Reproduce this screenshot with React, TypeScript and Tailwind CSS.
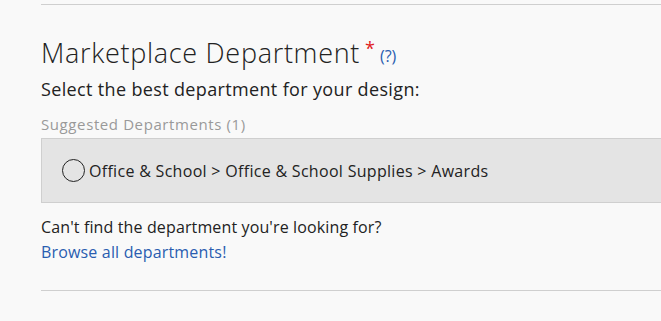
export default function App() {
  return (
    <div className="w-[661px] h-[321px] overflow-hidden bg-[#f9f9f9] pl-[41px] pt-1 text-[#222] font-['Open_Sans',sans-serif]">
      <div className="border-t border-[#cfcfcf]" />
      <div className="pt-[31px] flex items-start">
        <h2 className="text-[27px] leading-[34px] font-light tracking-[0.7px] text-[#222]">Marketplace Department</h2>
        <span className="ml-[5px] mt-[-1px] text-[18px] text-[#e02020]">*</span>
        <a className="ml-[5px] mt-[8px] text-[16px] text-[#2a5db0]">(?)</a>
      </div>
      <p className="mt-[7px] text-[18px] leading-[24px] tracking-[0.35px]">Select the best department for your design:</p>
      <p className="mt-[13px] text-[15px] leading-[20px] tracking-[0.6px] text-[#999]">Suggested Departments (1)</p>
      <div className="mt-[4px] h-[65px] border border-r-0 border-[#cfcfcf] bg-[#e4e4e4] flex items-center pl-[20px]">
        <span className="w-[23px] h-[23px] rounded-full border border-[#222] bg-[#e4e4e4]" />
        <span className="ml-[4px] text-[16px] tracking-[0.3px]">Office &amp; School &gt; Office &amp; School Supplies &gt; Awards</span>
      </div>
      <p className="mt-[13px] text-[16px] leading-[22px] tracking-[0.13px]">Can't find the department you're looking for?</p>
      <a className="block mt-[3px] text-[16px] leading-[22px] tracking-[0.17px] text-[#2a5db0]">Browse all departments!</a>
      <div className="mt-[27px] border-t border-[#cfcfcf]" />
    </div>
  );
}
